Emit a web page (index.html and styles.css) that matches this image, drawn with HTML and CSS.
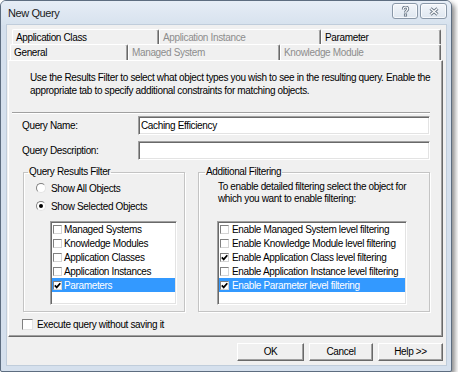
FILE: index.html
```html
<!DOCTYPE html>
<html lang="en">
<head>
    <meta charset="UTF-8">
    <title>New Query</title>
    <link rel="stylesheet" href="styles.css">
</head>
<body>
    <div class="window">
        <div class="titlebar">
            <span class="title">New Query</span>
            <div class="caption-buttons">
                <span class="cap-btn help">
                    <svg width="9" height="11" viewBox="0 0 9 11">
                        <path class="glyph-edge" d="M2.3 3.4 C2.3 1.7 3.3 1 4.5 1 C5.9 1 6.7 1.8 6.7 3 C6.7 4.6 4.5 4.7 4.5 6.6"/>
                        <path class="glyph-fill" d="M2.3 3.4 C2.3 1.7 3.3 1 4.5 1 C5.9 1 6.7 1.8 6.7 3 C6.7 4.6 4.5 4.7 4.5 6.6"/>
                        <rect x="3.4" y="7.9" width="2.2" height="2.2" fill="#fff" stroke="#6d7a89" stroke-width="0.9"/>
                    </svg>
                </span>
                <span class="cap-btn close">
                    <svg width="12" height="9" viewBox="0 0 12 9">
                        <path class="glyph-edge" d="M2.5 1.5 L9.5 7.5 M9.5 1.5 L2.5 7.5"/>
                        <path class="glyph-fill" d="M2.5 1.5 L9.5 7.5 M9.5 1.5 L2.5 7.5"/>
                    </svg>
                </span>
            </div>
        </div>

        <div class="client">
            <div class="tabs">
                <div class="tab-row back">
                    <div class="tab tab-appclass">Application Class</div>
                    <div class="tab tab-appinst disabled">Application Instance</div>
                    <div class="tab tab-param">Parameter</div>
                </div>
                <div class="tab-row front">
                    <div class="tab tab-general">General</div>
                    <div class="tab tab-managed disabled">Managed System</div>
                    <div class="tab tab-km disabled">Knowledge Module</div>
                </div>
            </div>

            <div class="page">
                <p class="intro">Use the Results Filter to select what object types you wish to see in the resulting query. Enable the appropriate tab to specify additional constraints for matching objects.</p>
                <div class="sep"></div>

                <div class="field">
                    <label>Query Name:</label>
                    <div class="input">Caching Efficiency</div>
                </div>
                <div class="field second">
                    <label>Query Description:</label>
                    <div class="input"></div>
                </div>

                <div class="groups">
                    <fieldset class="group results">
                        <legend>Query Results Filter</legend>
                        <div class="radio-row"><span class="radio"></span>Show All Objects</div>
                        <div class="radio-row second"><span class="radio on"></span>Show Selected Objects</div>
                        <div class="listbox results-list">
                            <div class="item"><span class="cb"></span>Managed Systems</div>
                            <div class="item"><span class="cb"></span>Knowledge Modules</div>
                            <div class="item"><span class="cb"></span>Application Classes</div>
                            <div class="item"><span class="cb"></span>Application Instances</div>
                            <div class="item selected"><span class="cb"><svg width="7" height="7" viewBox="0 0 7 7"><path d="M0.8 3.4 L2.7 5.4 L6.3 1.2"/></svg></span>Parameters</div>
                        </div>
                    </fieldset>

                    <fieldset class="group additional">
                        <legend>Additional Filtering</legend>
                        <p class="hint">To enable detailed filtering select the object for which you want to enable filtering:</p>
                        <div class="listbox additional-list">
                            <div class="item"><span class="cb"></span>Enable Managed System level filtering</div>
                            <div class="item"><span class="cb"></span>Enable Knowledge Module level filtering</div>
                            <div class="item"><span class="cb"><svg width="7" height="7" viewBox="0 0 7 7"><path d="M0.8 3.4 L2.7 5.4 L6.3 1.2"/></svg></span>Enable Application Class level filtering</div>
                            <div class="item"><span class="cb"></span>Enable Application Instance level filtering</div>
                            <div class="item selected"><span class="cb"><svg width="7" height="7" viewBox="0 0 7 7"><path d="M0.8 3.4 L2.7 5.4 L6.3 1.2"/></svg></span>Enable Parameter level filtering</div>
                        </div>
                    </fieldset>
                </div>

                <label class="exec"><span class="checkbox"></span>Execute query without saving it</label>
            </div>

            <div class="buttons">
                <span class="btn ok">OK</span>
                <span class="btn cancel">Cancel</span>
                <span class="btn help-btn">Help &gt;&gt;</span>
            </div>
        </div>
    </div>
</body>
</html>
```

FILE: styles.css
```css
* {
    box-sizing: border-box;
    margin: 0;
    padding: 0;
}
body {
    background-color: #fff;
    font-family: "Liberation Sans", Arial, sans-serif;
    font-size: 10px;
    letter-spacing: -0.35px;
    color: #000;
}
.window {
    width: 452px;
    height: 372px;
    border: 1px solid #5d6d80;
    border-radius: 6px 6px 2px 2px;
    background-color: #d5e0ed;
    box-shadow: 3px 3px 5px rgba(0, 0, 0, 0.45);
}
.titlebar {
    height: 24px;
    display: flex;
    justify-content: space-between;
    padding: 0 4px 0 7px;
    background: linear-gradient(#e6edf6, #d7e2ee);
    border-radius: 5px 5px 0 0;
}
.title {
    font-size: 11px;
    letter-spacing: -0.4px;
    line-height: 24px;
    color: #1b1b1b;
}
.caption-buttons {
    display: flex;
    gap: 2px;
    margin-top: 2px;
}
.cap-btn {
    display: flex;
    align-items: center;
    justify-content: center;
    height: 16px;
    border: 1px solid #8a98a8;
    border-radius: 3px;
    background: linear-gradient(#f3f6fa, #dfe7f0);
    box-shadow: inset 0 0 0 1px rgba(255, 255, 255, 0.7);
}
.cap-btn.help {
    width: 26px;
}
.cap-btn.close {
    width: 27px;
}
.glyph-edge {
    fill: none;
    stroke: #6d7a89;
    stroke-width: 3;
}
.glyph-fill {
    fill: none;
    stroke: #fff;
    stroke-width: 1.2;
}
.client {
    margin: 0 5px 0 6px;
    height: 340px;
    background-color: #f0f0f0;
    box-shadow: 0 0 0 1px #c0cddb;
}

/* tabs */
.tabs {
    padding-top: 4px;
}
.tab-row {
    display: flex;
    height: 15px;
}
.tab-row.back {
    margin-left: 5px;
}
.tab-row.front {
    margin-left: 3px;
    height: 16px;
}
.tab {
    border-top: 1px solid #fff;
    border-left: 1px solid #fff;
    border-right: 1px solid #696969;
    box-shadow: inset -1px 0 #a0a0a0;
    border-radius: 2px 2px 0 0;
    padding: 1px 0 0 3px;
    line-height: 13px;
    white-space: nowrap;
}
.tab.disabled {
    color: #8d8d8d;
}
.tab-appclass { width: 147px; }
.tab-appinst { width: 162px; }
.tab-param { width: 120px; }
.tab-general { width: 118px; }
.tab-managed { width: 152px; }
.tab-km { width: 161px; }

/* tab page */
.page {
    margin-left: 1px;
    width: 435px;
    height: 277px;
    border: 1px solid;
    border-color: #fff #696969 #696969 #fff;
    box-shadow: inset -1px -1px #a0a0a0;
}
.intro {
    margin: 10px 0 0 21px;
    width: 408px;
    line-height: 13px;
}
.sep {
    margin: 15px 0 0 3px;
    width: 418px;
    height: 2px;
    border-top: 1px solid #a0a0a0;
    border-bottom: 1px solid #fff;
}
.field {
    display: flex;
    align-items: center;
    margin: 2px 0 0 13px;
}
.field.second {
    margin-top: 6px;
}
.field label {
    width: 116px;
}
.input {
    width: 292px;
    height: 19px;
    background-color: #fff;
    border: 1px solid;
    border-color: #a0a0a0 #fff #fff #a0a0a0;
    box-shadow: inset 1px 1px #696969, inset -1px -1px #e3e3e3;
    padding-left: 2px;
    line-height: 17px;
}

/* group boxes */
.groups {
    display: flex;
    gap: 13px;
    margin: 6px 0 0 14px;
}
.group {
    height: 146px;
    border: 1px solid #c4c4c4;
    box-shadow: inset 1px 1px #fff, 1px 1px #fff;
    padding: 3px 0 0 4px;
}
.group.results {
    width: 162px;
}
.group.additional {
    width: 232px;
    padding-left: 6px;
}
.group legend {
    padding: 0 1px;
    line-height: 12px;
}
.radio-row {
    display: flex;
    align-items: center;
    gap: 5px;
    height: 14px;
    margin-left: 8px;
}
.radio-row.second {
    margin-top: 4px;
}
.radio {
    position: relative;
    width: 10px;
    height: 10px;
    border-radius: 50%;
    background-color: #fff;
    border: 1px solid;
    border-color: #808080 #e3e3e3 #e3e3e3 #808080;
}
.radio.on::after {
    content: "";
    position: absolute;
    left: 2px;
    top: 2px;
    width: 4px;
    height: 4px;
    border-radius: 50%;
    background-color: #000;
}
.hint {
    margin-left: 13px;
    width: 196px;
    line-height: 12px;
}

/* list boxes */
.listbox {
    height: 84px;
    background-color: #fff;
    border: 1px solid;
    border-color: #a0a0a0 #fff #fff #a0a0a0;
    box-shadow: inset 1px 1px #696969, inset -1px -1px #e3e3e3;
    padding: 0 1px;
}
.results-list {
    width: 127px;
    margin: 8px 0 0 22px;
}
.additional-list {
    width: 190px;
    margin: 16px 0 0 12px;
}
.item {
    display: flex;
    align-items: center;
    gap: 2px;
    height: 14px;
    padding-left: 1px;
    white-space: nowrap;
    overflow: hidden;
}
.additional-list .item {
    gap: 3px;
}
.item.selected {
    background-color: #3399ff;
    color: #fff;
}
.cb {
    display: flex;
    flex: none;
    align-items: center;
    justify-content: center;
    width: 9px;
    height: 9px;
    background-color: #fff;
    border: 1px solid;
    border-color: #808080 #d4d4d4 #d4d4d4 #808080;
}
.cb path {
    fill: none;
    stroke: #000;
    stroke-width: 1.7;
}
.exec {
    display: flex;
    align-items: center;
    gap: 4px;
    height: 11px;
    margin: 7px 0 0 13px;
}
.checkbox {
    width: 11px;
    height: 11px;
    background-color: #fff;
    border: 1px solid;
    border-color: #808080 #e3e3e3 #e3e3e3 #808080;
}

/* dialog buttons */
.buttons {
    display: flex;
    justify-content: flex-end;
    gap: 5px;
    margin-top: 6px;
    padding-right: 3px;
}
.btn {
    height: 18px;
    line-height: 16px;
    text-align: center;
    border: 1px solid;
    border-color: #fff #696969 #696969 #fff;
    box-shadow: inset -1px -1px #a0a0a0;
    background-color: #f0f0f0;
}
.btn.ok { width: 67px; }
.btn.cancel { width: 64px; }
.btn.help-btn { width: 65px; }
```
